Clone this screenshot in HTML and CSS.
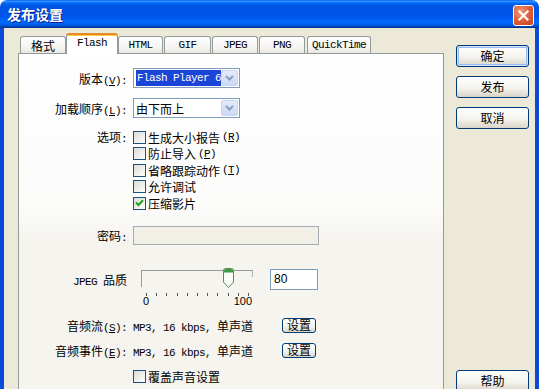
FILE: index.html
```html
<!DOCTYPE html>
<html lang="zh-CN">
<head>
    <meta charset="UTF-8">
    <title>发布设置</title>
    <link rel="stylesheet" href="styles.css">
</head>
<body>
<div class="window">
    <div class="titlebar">
        <span class="title">发布设置</span>
        <span class="close-btn">
            <svg width="13" height="13" viewBox="0 0 13 13"><path d="M2.5 2.5 L10.5 10.5 M10.5 2.5 L2.5 10.5" stroke="#fff" stroke-width="2.2" stroke-linecap="square"/></svg>
        </span>
    </div>

    <div class="frame">
        <div class="main">
            <div class="tabs">
                <div class="tab tab-fmt">格式</div>
                <div class="tab tab-flash active"><span class="en">Flash</span></div>
                <div class="tab tab-html"><span class="en">HTML</span></div>
                <div class="tab tab-gif"><span class="en">GIF</span></div>
                <div class="tab tab-jpeg"><span class="en">JPEG</span></div>
                <div class="tab tab-png"><span class="en">PNG</span></div>
                <div class="tab tab-qt"><span class="en">QuickTime</span></div>
            </div>

            <div class="panel">
                <!-- 版本 -->
                <div class="row row-version">
                    <span class="lbl">版本<span class="en">(<u>V</u>):</span></span>
                    <div class="select">
                        <span class="sel-text"><span class="hl en">Flash Player 6</span></span>
                        <span class="sel-btn"><svg width="9" height="6" viewBox="0 0 9 6"><path d="M1 1 L4.5 4.5 L8 1" fill="none" stroke="#8b9bbd" stroke-width="2"/></svg></span>
                    </div>
                </div>

                <!-- 加载顺序 -->
                <div class="row row-order">
                    <span class="lbl">加载顺序<span class="en">(<u>L</u>):</span></span>
                    <div class="select">
                        <span class="sel-text">由下而上</span>
                        <span class="sel-btn"><svg width="9" height="6" viewBox="0 0 9 6"><path d="M1 1 L4.5 4.5 L8 1" fill="none" stroke="#8b9bbd" stroke-width="2"/></svg></span>
                    </div>
                </div>

                <!-- 选项 -->
                <div class="row row-options">
                    <span class="lbl lbl-top">选项<span class="en">:</span></span>
                    <div class="checks">
                        <div class="check"><span class="box"></span>生成大小报告<span class="en">(<u>R</u>)</span></div>
                        <div class="check"><span class="box"></span>防止导入<span class="en">(<u>P</u>)</span></div>
                        <div class="check"><span class="box"></span>省略跟踪动作<span class="en">(<u>T</u>)</span></div>
                        <div class="check"><span class="box"></span>允许调试</div>
                        <div class="check"><span class="box"><svg width="9" height="8" viewBox="0 0 9 8"><path d="M1 3.5 L3.5 6 L8 1.2" fill="none" stroke="#21a121" stroke-width="2"/></svg></span>压缩影片</div>
                    </div>
                </div>

                <!-- 密码 -->
                <div class="row row-password">
                    <span class="lbl">密码<span class="en">:</span></span>
                    <div class="input-disabled"></div>
                </div>

                <!-- JPEG 品质 -->
                <div class="row row-jpeg">
                    <span class="lbl"><span class="en">JPEG </span>品质</span>
                    <div class="jpeg-ctrl">
                        <div class="slider">
                            <svg class="thumb" width="11" height="21" viewBox="0 0 11 21">
                                <path d="M0.5 2.5 Q0.5 0.5 2.5 0.5 H8.5 Q10.5 0.5 10.5 2.5 V14 L5.5 19.5 L0.5 14 Z" fill="#fbfbf8" stroke="#5b8a5b"/>
                                <path d="M1 2.5 Q1 1 2.5 1 H8.5 Q10 1 10 2.5 V4.5 H1 Z" fill="#3f9a47"/>
                            </svg>
                        </div>
                        <div class="num-input">80</div>
                    </div>
                </div>
                <div class="row row-scale">
                    <span></span>
                    <div class="scale">
                        <div class="ticks">
                            <i></i><i></i><i></i><i></i><i></i><i></i><i></i><i></i><i></i><i></i><i></i>
                        </div>
                        <div class="scale-labels"><span>0</span><span>100</span></div>
                    </div>
                </div>

                <!-- 音频 -->
                <div class="row row-stream">
                    <span class="lbl">音频流<span class="en">(<u>S</u>):</span></span>
                    <div class="audio">
                        <span><span class="en">MP3, 16 kbps, </span>单声道</span>
                        <span class="small-btn">设置</span>
                    </div>
                </div>
                <div class="row row-event">
                    <span class="lbl">音频事件<span class="en">(<u>E</u>):</span></span>
                    <div class="audio">
                        <span><span class="en">MP3, 16 kbps, </span>单声道</span>
                        <span class="small-btn">设置</span>
                    </div>
                </div>
                <div class="row row-override">
                    <span></span>
                    <div class="check"><span class="box"></span>覆盖声音设置</div>
                </div>
            </div>
        </div>

        <div class="side">
            <div class="btn btn-default">确定</div>
            <div class="btn">发布</div>
            <div class="btn">取消</div>
            <div class="btn btn-help">帮助</div>
        </div>
    </div>
</div>
</body>
</html>
```

FILE: styles.css
```css
/* 기본 */
* {
    box-sizing: border-box;
}
body {
    margin: 0;
    background: #ffffff;
    font-family: "Noto Sans CJK SC", sans-serif;
    font-size: 12px;
    color: #000;
}
.en {
    font-family: "Liberation Mono", monospace;
    font-size: 11px;
    letter-spacing: -0.6px;
}
u {
    text-decoration-thickness: 1px;
    text-underline-offset: 1px;
}

/* 창 */
.window {
    width: 539px;
    height: 389px;
    overflow: hidden;
    display: flex;
    flex-direction: column;
    border-radius: 7px 7px 0 0;
}
.titlebar {
    flex: none;
    height: 28px;
    display: flex;
    align-items: flex-start;
    padding: 0 5px 0 7px;
    background: linear-gradient(to bottom, #0058ee 0%, #3593ff 4%, #288eff 6%, #127dff 8%, #036ffc 10%, #0262ee 14%, #0057e5 20%, #0054e3 24%, #0055eb 56%, #005bf5 66%, #026afe 76%, #0062ef 86%, #0052d6 92%, #0040ab 96%, #003092 100%);
}
.title {
    flex: 1;
    margin-top: 5px;
    color: #ffffff;
    font-weight: bold;
    font-size: 14px;
    line-height: 19px;
    text-shadow: 1px 1px #0a1e8a;
}
.close-btn {
    width: 21px;
    height: 21px;
    margin-top: 5px;
    border: 1px solid #ffffff;
    border-radius: 3px;
    background: radial-gradient(circle at 35% 30%, #f09a7c 0%, #e0643e 45%, #c4401c 100%);
    display: flex;
    align-items: center;
    justify-content: center;
}

.frame {
    flex: 1;
    min-height: 0;
    display: flex;
    background: #ece9d8;
    border-left: 4px solid #0b4ad8;
    border-right: 4px solid #0b4ad8;
}

/* 탭 */
.main {
    width: 440px;
    padding: 5px 0 0 14px;
    display: flex;
    flex-direction: column;
}
.tabs {
    height: 20px;
    display: flex;
    align-items: flex-end;
    padding-left: 2px;
    position: relative;
    z-index: 1;
}
.tab {
    height: 17px;
    border: 1px solid #919b9c;
    border-bottom: none;
    border-radius: 3px 3px 0 0;
    background: linear-gradient(#ffffff, #f6f5f1 60%, #e9e7df);
    display: flex;
    align-items: center;
    justify-content: center;
    line-height: 1;
    padding-top: 1px;
}
.tab.active {
    height: 21px;
    margin-bottom: -1px;
    background: #ffffff;
    border-top: 2px solid #e68b2c;
    box-shadow: inset 0 1px 0 #ffc83c;
    padding-top: 0;
    padding-bottom: 3px;
}
.tab-fmt { width: 46px; }
.tab-flash { width: 52px; }
.tab-html { width: 45px; }
.tab-gif { width: 47px; margin-left: 1px; }
.tab-jpeg { width: 46px; margin-left: 1px; }
.tab-png { width: 46px; margin-left: 1px; }
.tab-qt { width: 64px; margin-left: 2px; }

/* 패널 */
.panel {
    flex: 1;
    width: 426px;
    border: 1px solid #919b9c;
    border-bottom: none;
    background: linear-gradient(#fefefe 0, #fcfcfb 150px, #f5f4ef 185px, #f5f4ef 100%);
    display: flex;
    flex-direction: column;
}
.row {
    display: grid;
    grid-template-columns: 108px 185px;
    column-gap: 6px;
    align-items: center;
}
.lbl {
    text-align: right;
    white-space: nowrap;
}
.row-version { margin-top: 14px; height: 20px; }
.row-order { margin-top: 10px; height: 20px; }
.row-options { margin-top: 11px; align-items: start; }
.lbl-top { line-height: 16.5px; }
.row-password { margin-top: 14px; height: 19px; }
.row-jpeg { margin-top: 24px; height: 21px; }
.row-scale { margin-top: 2px; }
.row-stream { margin-top: 10px; height: 16px; }
.row-event { margin-top: 9px; height: 16px; }
.row-override { margin-top: 12px; height: 14px; }

/* 콤보박스 */
.select {
    width: 107px;
    height: 20px;
    border: 1px solid #7f9db9;
    background: #ffffff;
    display: flex;
    padding: 1px;
}
.sel-text {
    flex: 1;
    overflow: hidden;
    white-space: nowrap;
    padding-left: 1px;
    display: flex;
    align-items: center;
}
.hl {
    background: #1a45d8;
    color: #ffffff;
    padding: 1px 1px;
    line-height: 14px;
}
.sel-btn {
    width: 17px;
    flex: none;
    border: 1px solid #c8d6f5;
    border-radius: 2px;
    background: linear-gradient(#e4ebfb, #ccd9f5);
    display: flex;
    align-items: center;
    justify-content: center;
}

/* 체크박스 */
.checks {
    display: flex;
    flex-direction: column;
}
.check {
    height: 16.5px;
    display: flex;
    align-items: center;
    gap: 2px;
    white-space: nowrap;
}
.row-override .check {
    height: 14px;
}
.box {
    width: 13px;
    height: 13px;
    flex: none;
    border: 1px solid #1c5180;
    background: linear-gradient(135deg, #dcdcd7, #f4f4f0 70%, #ffffff);
    display: flex;
    align-items: center;
    justify-content: center;
}

/* 입력 */
.input-disabled {
    width: 186px;
    height: 19px;
    border: 1px solid #a5acb2;
    background: #f1efe6;
}
.jpeg-ctrl {
    display: flex;
    align-items: center;
    justify-content: space-between;
    padding-left: 8px;
}
.slider {
    position: relative;
    width: 112px;
    height: 17px;
    margin-top: -1px;
    border-top: 1px solid #9a9a9a;
    border-left: 1px solid #9a9a9a;
}
.slider::after {
    content: "";
    position: absolute;
    right: 0;
    top: 0;
    width: 1px;
    height: 6px;
    background: #b0b0b0;
}
.thumb {
    position: absolute;
    left: 81px;
    top: -3px;
}
.num-input {
    width: 48px;
    height: 21px;
    border: 1px solid #7f9db9;
    background: #ffffff;
    font-family: "Liberation Sans", Arial, sans-serif;
    font-size: 12px;
    line-height: 19px;
    padding-left: 3px;
}

/* 눈금 */
.scale {
    padding-left: 13px;
}
.ticks {
    width: 103px;
    height: 4px;
    display: flex;
    justify-content: space-between;
}
.ticks i {
    width: 1px;
    height: 3px;
    margin-top: 1px;
    background: #555;
}
.scale-labels {
    width: 109px;
    margin-left: -3px;
    display: flex;
    justify-content: space-between;
    font-family: "Liberation Sans", Arial, sans-serif;
    font-size: 11px;
    line-height: 11px;
}

/* 오디오 */
.audio {
    display: flex;
    align-items: center;
    justify-content: space-between;
    padding-right: 2px;
    white-space: nowrap;
}
.small-btn {
    width: 34px;
    height: 15px;
    border: 1px solid #003c74;
    border-radius: 3px;
    background: linear-gradient(#ffffff, #f2f1ec 60%, #d8d3c8);
    display: flex;
    align-items: center;
    justify-content: center;
    line-height: 1;
}

/* 오른쪽 버튼 */
.side {
    padding: 17px 0 0 12px;
    display: flex;
    flex-direction: column;
    gap: 9px;
}
.btn {
    width: 73px;
    height: 22px;
    flex: none;
    border: 1px solid #003c74;
    border-radius: 3px;
    background: linear-gradient(#ffffff, #f4f3ee 55%, #d9d4c9);
    display: flex;
    align-items: center;
    justify-content: center;
    line-height: 1;
}
.btn-default {
    box-shadow: inset 0 0 0 1px #cee0fb, inset 0 0 0 2px #9bbcef;
}
.btn-help {
    margin-top: 232px;
}
```
